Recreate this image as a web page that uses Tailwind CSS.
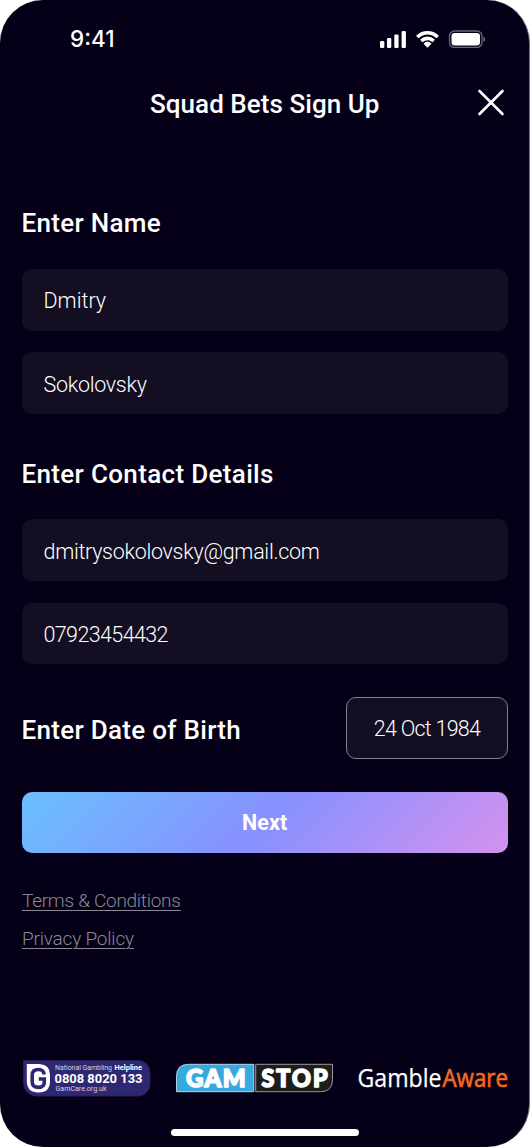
<!DOCTYPE html>
<html lang="en">
<head>
<meta charset="utf-8">
<title>Squad Bets Sign Up</title>
<script src="https://cdn.jsdelivr.net/npm/@tailwindcss/browser@4"></script>
</head>
<body class="bg-white">
<main class="w-[530px] h-[1147px] rounded-[43px] bg-[#050018] border-r border-[#77737f] text-white font-['Roboto',sans-serif] flex flex-col overflow-hidden">
  <header class="h-[78px] shrink-0 pl-[70px] pr-[44px] flex items-center justify-between">
    <span class="font-['Inter',sans-serif] font-medium text-[22.5px] leading-none tracking-[0px] pt-px">9:41</span>
    <svg class="w-[106px] h-[18px]" viewBox="379 30 106 18" fill="#fff">
      <rect x="380" y="41" width="4.3" height="7" rx="1.2"/>
      <rect x="387" y="38" width="4.3" height="10" rx="1.2"/>
      <rect x="394.3" y="34.4" width="4.3" height="13.6" rx="1.2"/>
      <rect x="401.6" y="31" width="4.3" height="17" rx="1.2"/>
      <path d="M427.5 34.6c3.2 0 6.2 1.2 8.5 3.5.2.2.5.2.7 0l1.9-1.9c.2-.2.2-.5 0-.7a16 16 0 0 0-22.2 0c-.2.2-.2.5 0 .7l1.9 1.9c.2.2.5.2.7 0a12.2 12.2 0 0 1 8.5-3.5z"/>
      <path d="M427.5 40.2c1.7 0 3.3.6 4.6 1.8.2.2.5.2.7 0l1.9-1.9c.2-.2.2-.5 0-.7a10.4 10.4 0 0 0-14.4 0c-.2.2-.2.5 0 .7l1.9 1.9c.2.2.5.2.7 0a6.8 6.8 0 0 1 4.6-1.8z"/>
      <path d="M431.2 43.9c.2-.2.2-.5 0-.7a5.7 5.7 0 0 0-7.4 0c-.2.2-.2.5 0 .7l3.3 3.5c.2.2.5.2.7 0z"/>
      <rect x="449.5" y="31" width="32.5" height="16.5" rx="5" fill="none" stroke="#fff" stroke-opacity=".4" stroke-width="1.3"/>
      <rect x="451.5" y="33" width="28.5" height="12.5" rx="3.3"/>
      <path d="M483.5 36.8v5c1-.4 1.7-1.4 1.7-2.5s-.7-2.1-1.7-2.5z" fill-opacity=".45"/>
    </svg>
  </header>

  <div class="h-[52px] shrink-0 pl-[150px] pr-[24px] flex items-center justify-between">
    <h1 class="text-[26px] leading-none font-medium tracking-[0.05px] whitespace-nowrap">Squad Bets Sign Up</h1>
    <svg class="w-[28px] h-[28px] -mt-[4px]" viewBox="0 0 28 28" fill="none" stroke="#fff" stroke-width="2.6" stroke-linecap="round"><path d="M2.5 3 25.5 26M25.5 3 2.5 26"/></svg>
  </div>

  <form class="pt-[80px] pl-[21.5px] pr-[21px] flex flex-col">
    <h2 class="h-[26px] flex items-center text-[26px] leading-none font-medium"><span class="tracking-[0.3px]">Enter Name</span></h2>
    <div class="mt-[33px] flex flex-col gap-[21.6px] text-[21.5px] font-light">
      <div class="h-[61.7px] rounded-[10px] bg-[#130e22] px-[22px] pt-[2px] flex items-center"><span class="tracking-[0px]">Dmitry</span></div>
      <div class="h-[61.7px] rounded-[10px] bg-[#130e22] px-[22px] pt-[3px] flex items-center"><span class="tracking-[-0.3px]">Sokolovsky</span></div>
    </div>
    <h2 class="mt-[47px] h-[26px] flex items-center text-[26px] leading-none font-medium"><span class="tracking-[0.34px]">Enter Contact Details</span></h2>
    <div class="mt-[32.5px] flex flex-col gap-[21.6px] text-[21.5px] font-light">
      <div class="h-[61.7px] rounded-[10px] bg-[#130e22] px-[22px] pt-[3px] flex items-center"><span class="tracking-[-0.3px]">dmitrysokolovsky@gmail.com</span></div>
      <div class="h-[61.7px] rounded-[10px] bg-[#130e22] px-[22px] pt-[3px] flex items-center"><span class="tracking-[-0.62px]">07923454432</span></div>
    </div>
    <div class="mt-[33px] flex items-center justify-between">
      <h2 class="pt-[3px] text-[26px] leading-none font-medium"><span class="tracking-[0.3px]">Enter Date of Birth</span></h2>
      <div class="w-[162px] h-[61.7px] rounded-[10px] border-[1.4px] border-[#827f8b] bg-[#130e22] pt-[2px] flex items-center justify-center text-[21.5px] font-light whitespace-nowrap"><span class="tracking-[-0.75px]">24 Oct 1984</span></div>
    </div>
    <button type="button" class="mt-[32.5px] h-[61.7px] rounded-[10px] bg-[linear-gradient(135deg,#6bbdfd_3%,#8890ff_50%,#d492ee_100%)] pt-[2px] text-[21.5px] font-bold"><span class="tracking-[0.1px]">Next</span></button>
  </form>

  <nav class="mt-[34px] pl-[22px] flex flex-col items-start gap-[10px] text-[19px] font-light text-[#8b8893] underline underline-offset-[3px] decoration-1">
    <a class="h-[28px] flex items-center tracking-[-0.27px]">Terms &amp; Conditions</a>
    <a class="h-[28px] flex items-center tracking-[-0.2px]">Privacy Policy</a>
  </nav>

  <footer class="mt-auto h-[92px] shrink-0 flex flex-col justify-between pb-[11px]">
    <svg class="w-[530px] h-[46px]" viewBox="0 1055 530 46">
      <path d="M23.5 1060.5H138a12 12 0 0 1 12 12V1084a12 12 0 0 1-12 12H36.500a13 13 0 0 1-13-13z" fill="#2e2873" stroke="#262052"/>
      <path d="M26.800 1064H39.500Q50 1064.500 50 1075V1081Q50 1092.500 38.500 1092.500T26.800 1081z" fill="#fff"/>
      <path d="M44.300 1074.500Q43.500 1069.500 38.500 1069.500Q32.200 1069.500 32.200 1075V1082Q32.200 1087.400 38.500 1087.400Q44.300 1087.400 44.300 1082V1079H38.800" fill="none" stroke="#2e2873" stroke-width="3.600"/>
      <g fill="#fff" font-family="Roboto, sans-serif">
        <text x="55" y="1070.3" font-size="6.8" textLength="57" lengthAdjust="spacingAndGlyphs" fill="#d5d2e2">National Gambling</text>
        <text x="114.500" y="1070.3" font-size="6.8" font-weight="700" textLength="27.5" lengthAdjust="spacingAndGlyphs">Helpline</text>
        <text x="54.500" y="1082.8" font-size="12.500" font-weight="700" textLength="88" lengthAdjust="spacingAndGlyphs">0808 8020 133</text>
        <text x="55.500" y="1091.3" font-size="6.8" textLength="51" lengthAdjust="spacingAndGlyphs" fill="#d5d2e2">GamCare.org.uk</text>
      </g>
      <path d="M253.800 1064.3V1091.7H176.500V1076.500Q176.500 1064.3 188.500 1064.3z" fill="#36a9e1" stroke="#c9dce9" stroke-width=".9"/>
      <path d="M255.700 1064.3H332.500V1079.500Q332.500 1091.700 320.500 1091.7H255.700z" fill="#1d1d1b" stroke="#aaa7b2" stroke-width=".9"/>
      <g fill="#fff" stroke="#fff" stroke-width="1.7" stroke-linejoin="round" font-family="Lato, sans-serif" font-weight="900" font-size="25">
        <g transform="translate(186 1087) scale(.96 1)"><text textLength="62" lengthAdjust="spacing">GAM</text></g>
        <g transform="translate(261.500 1087) scale(.93 1)"><text textLength="71" lengthAdjust="spacing">STOP</text></g>
      </g>
      <g font-family="Open Sans, sans-serif" font-size="26">
        <text x="357.5" y="1087.3" fill="#fff" stroke="#fff" stroke-width=".25" textLength="84" lengthAdjust="spacingAndGlyphs">Gamble</text>
        <text x="442.5" y="1087.3" fill="#f26a21" stroke="#f26a21" stroke-width=".7" textLength="65.5" lengthAdjust="spacingAndGlyphs">Aware</text>
      </g>
    </svg>
    <div class="ml-[171px] w-[187.5px] h-[7px] rounded-full bg-white"></div>
  </footer>
</main>
</body>
</html>
